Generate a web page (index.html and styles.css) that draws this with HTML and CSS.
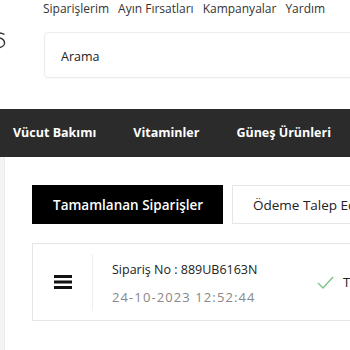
FILE: index.html
```html
<!DOCTYPE html>
<html lang="tr">
<head>
    <meta charset="UTF-8">
    <title>Siparişlerim</title>
    <link rel="stylesheet" href="styles.css">
</head>
<body>

<div class="top-links">
    <a href="#">Siparişlerim</a>
    <a href="#">Ayın Fırsatları</a>
    <a href="#">Kampanyalar</a>
    <a href="#">Yardım</a>
</div>

<div class="search-row">
    <div class="logo">
        <svg width="10" height="20" viewBox="0 0 10 20">
            <path d="M0 1 Q3 1.5 4.5 2.5" fill="none" stroke="#333" stroke-width="1.3"/>
            <path d="M0 6 Q5 8 4.5 11.5 Q4 14.5 0 15.5" fill="none" stroke="#333" stroke-width="1.4"/>
        </svg>
    </div>
    <div class="search">Arama</div>
</div>

<div class="categories">
    <a href="#">Vücut Bakımı</a>
    <a href="#">Vitaminler</a>
    <a href="#">Güneş Ürünleri</a>
</div>

<div class="page">
    <div class="side"></div>
    <div class="content">
        <div class="tabs">
            <button class="tab active">Tamamlanan Siparişler</button>
            <button class="tab">Ödeme Talep Edilen Siparişler</button>
        </div>
        <div class="order">
            <div class="order-menu">
                <svg width="18" height="16" viewBox="0 0 18 16">
                    <rect x="0" y="1" width="18" height="3" fill="#111"/>
                    <rect x="0" y="6.5" width="18" height="3" fill="#111"/>
                    <rect x="0" y="12" width="18" height="3" fill="#111"/>
                </svg>
            </div>
            <div class="order-info">
                <div class="order-no">Sipariş No : 889UB6163N</div>
                <div class="order-date">24-10-2023 12:52:44</div>
            </div>
            <div class="order-status">
                <svg width="17" height="13" viewBox="0 0 17 13">
                    <path d="M1 7 L6 12 L16 1" fill="none" stroke="#7cc58a" stroke-width="1.4"/>
                </svg>
                <span>Teslim Edildi</span>
            </div>
        </div>
    </div>
</div>

</body>
</html>
```

FILE: styles.css
```css
body {
    font-family: "Open Sans", Arial, sans-serif;
    background: #fff;
    margin: 0;
    width: 350px;
    overflow: hidden;
    color: #222;
}
a {
    text-decoration: none;
    color: inherit;
}
.top-links {
    display: flex;
    gap: 9px;
    padding: 0 0 0 43px;
    height: 17px;
    font-size: 12px;
    line-height: 17px;
    color: #333;
    white-space: nowrap;
}
.search-row {
    display: flex;
    margin-top: 15px;
    height: 46px;
}
.logo {
    width: 44px;
    flex-shrink: 0;
}
.search {
    flex: 1;
    min-width: 340px;
    border: 1px solid #ececec;
    border-radius: 4px;
    box-shadow: 0 1px 2px rgba(0,0,0,0.04);
    padding: 3px 0 0 16px;
    font-size: 12.5px;
    line-height: 41px;
    color: #222;
}
.categories {
    display: flex;
    gap: 37px;
    margin-top: 31px;
    height: 48px;
    padding-left: 13px;
    background: #2b2b2b;
    color: #fff;
    font-weight: 700;
    font-size: 12.5px;
    line-height: 48px;
    white-space: nowrap;
}
.page {
    display: flex;
    height: 200px;
}
.side {
    width: 4px;
    background: #f4f4f4;
    border-right: 1px solid #ececec;
    flex-shrink: 0;
}
.content {
    padding: 28px 0 0 27px;
    flex: 1;
    white-space: nowrap;
}
.tabs {
    display: flex;
    gap: 9px;
}
.tab {
    font-family: inherit;
    font-size: 13.5px;
    height: 39px;
    padding: 0 20px;
    border: 1px solid #e6e6e6;
    background: #fff;
    color: #222;
    flex-shrink: 0;
}
.tab.active {
    width: 191px;
    background: #000;
    border-color: #000;
    color: #fff;
    font-weight: 600;
}
.order {
    display: flex;
    align-items: center;
    margin-top: 19px;
    width: 400px;
    height: 76px;
    border: 1px solid #e6e6e6;
}
.order-menu {
    width: 59px;
    height: 57px;
    display: flex;
    align-items: center;
    justify-content: center;
    border-right: 1px solid #eee;
}
.order-info {
    padding: 2px 0 0 19px;
    width: 205px;
}
.order-no {
    font-size: 12.5px;
    color: #222;
}
.order-date {
    margin-top: 10px;
    font-size: 13px;
    letter-spacing: 1.1px;
    color: #888;
}
.order-status {
    display: flex;
    align-items: center;
    gap: 9px;
    font-size: 13px;
    color: #222;
}
```
